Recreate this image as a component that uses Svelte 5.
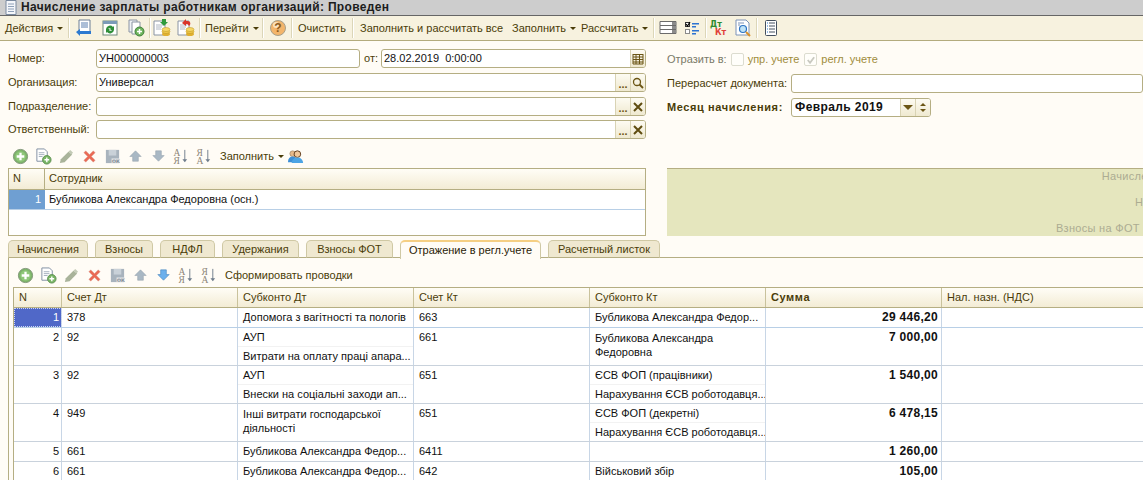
<script>
  const topBar = [
    { text: 'Действия', arrow: true, w: 64, pad: 1 }, { sep: 1 },
    { icon: 'back', w: 28 }, { icon: 'refresh', w: 24 }, { icon: 'copy', w: 27 }, { sep: 1 },
    { icon: 'coinsIn', w: 22 }, { icon: 'coinsOut', w: 26 }, { sep: 1 },
    { text: 'Перейти', arrow: true, w: 61, pad: 4 }, { sep: 1 },
    { icon: 'help', w: 27 }, { sep: 1 },
    { text: 'Очистить', w: 59, pad: 5 }, { sep: 1 },
    { text: 'Заполнить и рассчитать все', w: 158, pad: 6 },
    { text: 'Заполнить', arrow: true, w: 69, pad: 0 },
    { text: 'Рассчитать', arrow: true, w: 72, pad: 0 }, { sep: 1 },
    { icon: 'rows', w: 26 }, { icon: 'checks', w: 24 }, { sep: 1 },
    { icon: 'dtkt', w: 22 }, { icon: 'preview', w: 27 }, { sep: 1 },
    { icon: 'list', w: 26 }
  ];

  const listTools = ['add', 'addDoc', 'edit', 'del', 'save', 'up', 'down', 'sortAz', 'sortZa'];

  const tabs = [
    { name: 'Начисления', w: 80 },
    { name: 'Взносы', w: 58 },
    { name: 'НДФЛ', w: 55 },
    { name: 'Удержания', w: 77 },
    { name: 'Взносы ФОТ', w: 87 },
    { name: 'Отражение в регл.учете', w: 141, active: true },
    { name: 'Расчетный листок', w: 112 }
  ];

  const columns = ['N', 'Счет Дт', 'Субконто Дт', 'Счет Кт', 'Субконто Кт', 'Сумма', 'Нал. назн. (НДС)'];

  const entries = [
    { n: 1, dt: '378', subDt: ['Допомога з вагітності та пологів'], kt: '663', subKt: ['Бубликова Александра Федор...'], sum: '29 446,20' },
    { n: 2, dt: '92', subDt: ['АУП', 'Витрати на оплату праці апара...'], kt: '661', subKt: ['Бубликова Александра Федоровна'], wrapKt: true, sum: '7 000,00' },
    { n: 3, dt: '92', subDt: ['АУП', 'Внески на соціальні заходи ап...'], kt: '651', subKt: ['ЄСВ ФОП (працівники)', 'Нарахування ЄСВ роботодавця...'], sum: '1 540,00' },
    { n: 4, dt: '949', subDt: ['Інші витрати господарської діяльності'], wrapDt: true, kt: '651', subKt: ['ЄСВ ФОП (декретні)', 'Нарахування ЄСВ роботодавця...'], sum: '6 478,15' },
    { n: 5, dt: '661', subDt: ['Бубликова Александра Федор...'], kt: '6411', subKt: [''], sum: '1 260,00' },
    { n: 6, dt: '661', subDt: ['Бубликова Александра Федор...'], kt: '642', subKt: ['Військовий збір'], sum: '105,00' }
  ];
</script>

{#snippet icon(name)}
  <svg class="ico" viewBox="0 0 18 18" width="18" height="18">
    {#if name === 'back'}
      <path d="M4 1h11v13H4z" fill="#fff" stroke="#6d7f95" />
      <path d="M6 4h7M6 6h7M6 8h7" stroke="#5a7fb0" />
      <path d="M1 13l4-3v2h11v3H5v2z" fill="#2b79d0" />
    {:else if name === 'refresh'}
      <rect x="2" y="2" width="14" height="14" fill="#fff" stroke="#6f8a7c" />
      <rect x="2" y="2" width="14" height="3" fill="#7b9bb8" />
      <path d="M5 10a4 4 0 0 1 7-2l1-1v4H9l1-1a2 2 0 0 0-3 0zM13 11a4 4 0 0 1-7 2l-1 1v-4h4l-1 1a2 2 0 0 0 3 0z" fill="#2f8f3a" />
    {:else if name === 'copy'}
      <path d="M2 1h8v12H2z" fill="#eef1f5" stroke="#8a94a3" />
      <path d="M5 3h8v12H5z" fill="#fff" stroke="#8a94a3" />
      <circle cx="12.5" cy="12.5" r="4.5" fill="#6cb35c" stroke="#3f7f3a" />
      <path d="M12.5 10v5M10 12.5h5" stroke="#fff" stroke-width="1.5" />
    {:else if name === 'coinsIn' || name === 'coinsOut'}
      <path d="M1 2h11v14H1z" fill="#fff" stroke="#8a94a3" />
      <path d="M3 6h7M3 8h6M3 10h5" stroke="#b0b8c4" />
      <ellipse cx="13" cy="15" rx="4" ry="2" fill="#e0b030" />
      <ellipse cx="13" cy="12.5" rx="4" ry="2" fill="#f0c848" stroke="#b8901e" stroke-width=".5" />
      <ellipse cx="13" cy="10.5" rx="4" ry="2" fill="#f6d765" stroke="#b8901e" stroke-width=".5" />
      {#if name === 'coinsIn'}
        <path d="M9 0h4v3h2l-4 4-4-4h2z" fill="#2e9a3c" />
      {:else}
        <path d="M5 4l4-4v2h2a3 3 0 0 1 2 4l-1 1a3 3 0 0 0-3-2v2z" fill="#d9352a" />
      {/if}
    {:else if name === 'help'}
      <circle cx="9" cy="9" r="7.5" fill="#f3b56b" stroke="#a8a08a" />
      <circle cx="7" cy="6" r="3" fill="#fbe3bf" />
      <text x="9" y="13" class="ico-q">?</text>
    {:else if name === 'rows'}
      <g fill="#fff" stroke="#6b6b6b">
        <path d="M1 2.500h16v4H1zM1 6.500h16v4H1zM1 10.500h16v4H1z" />
      </g>
      <path d="M13 3h4v3h-4zM13 7h4v3h-4zM13 11h4v3h-4z" fill="#8b8b8b" />
    {:else if name === 'checks'}
      <rect x="1.500" y="3.500" width="4" height="4" fill="#fff" stroke="#333" />
      <path d="M2 5l1.500 2L6 3" stroke="#000" fill="none" stroke-width="1.200" />
      <rect x="1.500" y="10.500" width="4" height="4" fill="#fff" stroke="#8a8a8a" />
      <path d="M8 4h7v1.500H8zM8 7h4v1.500H8zM8 11h7v1.500H8zM8 14h4v1.500H8z" fill="#2c73d2" />
    {:else if name === 'dtkt'}
      <text x="1" y="8" class="ico-dt">Дт</text>
      <text x="6" y="16" class="ico-kt">Кт</text>
    {:else if name === 'preview'}
      <path d="M2 1h10l3 3v12H2z" fill="#fff" stroke="#7c93b8" />
      <path d="M4 4h6M4 6h2" stroke="#7c93b8" />
      <circle cx="9" cy="10" r="3.500" fill="#bfe3f7" stroke="#2d74c4" stroke-width="1.200" />
      <path d="M12 13l4 4" stroke="#d8902a" stroke-width="2" />
    {:else if name === 'list'}
      <rect x="3.500" y="1.500" width="11" height="15" rx="1" fill="#fff" stroke="#44505f" />
      <path d="M5 4h1M5 7h1M5 10h1M5 13h1" stroke="#2a7ad0" />
      <path d="M7 4h6M7 7h6M7 10h6M7 13h6" stroke="#44505f" />
    {:else if name === 'add'}
      <circle cx="9" cy="9" r="7.500" fill="#7db56a" stroke="#7f9477" />
      <circle cx="9" cy="9" r="5.500" fill="#8fc77a" />
      <path d="M9 5v8M5 9h8" stroke="#fff" stroke-width="2.400" />
    {:else if name === 'addDoc'}
      <path d="M2 1h8l3 3v10H2z" fill="#fff" stroke="#7e8ca0" />
      <path d="M4 5h6M4 7h6M4 9h4" stroke="#a3aebd" />
      <circle cx="12.500" cy="12.500" r="4.500" fill="#78b565" stroke="#5c8f50" />
      <path d="M12.500 10v5M10 12.500h5" stroke="#fff" stroke-width="1.500" />
    {:else if name === 'edit'}
      <path d="M3 12l8-8 4 3-8 8-5 1z" fill="#a9b39a" />
      <path d="M11 4l2-2 3 3-2 2z" fill="#c3cab6" />
    {:else if name === 'del'}
      <path d="M3 5l2-2 4 4 4-4 2 2-4 4 4 4-2 2-4-4-4 4-2-2 4-4z" fill="#ea6a55" stroke="#d9a79c" stroke-width=".5" />
    {:else if name === 'save'}
      <rect x="2" y="2" width="14" height="14" fill="#a8b3bd" />
      <rect x="5" y="2" width="8" height="6" fill="#c9d1d8" />
      <rect x="8" y="11" width="8" height="5" fill="#dfe3e6" />
      <text x="8.500" y="15.500" class="ico-ok">ОК</text>
    {:else if name === 'up' || name === 'down'}
      <path d={name === 'up' ? 'M9 3l6 6h-3v5H6V9H3z' : 'M6 3h6v5h3l-6 6-6-6h3z'} fill="var(--arrow)" stroke="var(--arrow-line)" stroke-width=".6" />
    {:else if name === 'sortAz' || name === 'sortZa'}
      <text x="0.500" y="8" class="ico-sort">{name === 'sortAz' ? 'А' : 'Я'}</text>
      <text x="0.500" y="17" class="ico-sort">{name === 'sortAz' ? 'Я' : 'А'}</text>
      <path d="M12.500 2v12" stroke="#6f7d8c" />
      <path d="M10 12h5l-2.500 3z" fill="#6f7d8c" />
    {/if}
  </svg>
{/snippet}

{#snippet searchIcon()}
  <svg viewBox="0 0 12 12" width="12" height="12"><circle cx="5" cy="5" r="3.500" fill="none" stroke="#6b5514" stroke-width="1.300" /><path d="M7.500 7.500l3.500 3.500" stroke="#6b5514" stroke-width="1.800" /></svg>
{/snippet}

{#snippet clearField()}
  <div class="input">
    <span class="input-value"></span>
    <span class="input-btn dots">...</span>
    <span class="input-btn">
      <svg viewBox="0 0 12 12" width="12" height="12"><path d="M2 2l8 8M10 2l-8 8" stroke="#5f4c10" stroke-width="2" /></svg>
    </span>
  </div>
{/snippet}

{#snippet lines(items, wrap)}
  {#if wrap}
    <div class="line wrap">{items[0]}</div>
  {:else}
    {#each items as item, i}
      <div class="line" class:split={i > 0}>{item}</div>
    {/each}
  {/if}
{/snippet}

<div class="window">
  <div class="titlebar">
    <svg class="title-ico" viewBox="0 0 14 15" width="14" height="15">
      <path d="M2 .5h10v14H2z" fill="#f4f6fa" stroke="#7a8aa0" />
      <path d="M4 4h6M4 6.500h6M4 9h6M4 11.500h6" stroke="#8ea0b8" />
    </svg>
    <span class="title">Начисление зарплаты работникам организаций: Проведен</span>
  </div>

  <div class="toolbar">
    {#each topBar as item}
      {#if item.sep}
        <span class="sep"></span>
      {:else if item.icon}
        <span class="tool" style="width:{item.w}px">{@render icon(item.icon)}</span>
      {:else}
        <span class="tool text" style="width:{item.w}px;padding-left:{item.pad}px">
          {item.text}
          {#if item.arrow}<i class="caret"></i>{/if}
        </span>
      {/if}
    {/each}
  </div>

  <div class="form">
    <div class="form-left">
      <div class="row">
        <span class="label">Номер:</span>
        <div class="input number"><span class="input-value">УН000000003</span></div>
        <span class="from">от:</span>
        <div class="input date">
          <span class="input-value">28.02.2019  0:00:00</span>
          <span class="input-btn">
            <svg viewBox="0 0 12 12" width="12" height="12"><path d="M1 1.500h10M1 4h10M1 6.500h10M1 9h10M1 11h10M1 1v10M4 1v10M7.500 1v10M11 1v10" stroke="#6b5514" fill="none" /></svg>
          </span>
        </div>
      </div>
      <div class="row">
        <span class="label">Организация:</span>
        <div class="input grow">
          <span class="input-value">Универсал</span>
          <span class="input-btn dots">...</span>
          <span class="input-btn">{@render searchIcon()}</span>
        </div>
      </div>
      <div class="row">
        <span class="label">Подразделение:</span>
        <div class="grow">{@render clearField()}</div>
      </div>
      <div class="row tight">
        <span class="label">Ответственный:</span>
        <div class="grow">{@render clearField()}</div>
      </div>
    </div>

    <div class="form-right">
      <div class="reflect">
        <span class="muted">Отразить в:</span>
        <span class="check"></span>
        <span class="ochre">упр. учете</span>
        <span class="check checked">
          <svg viewBox="0 0 12 12" width="12" height="12"><path d="M3 6l2.500 3L10 3" fill="none" stroke="#c9c9c0" stroke-width="2" /></svg>
        </span>
        <span class="ochre">регл. учете</span>
      </div>
      <div class="row right">
        <span class="rlabel">Перерасчет документа:</span>
        <div class="input grow"><span class="input-value"></span></div>
      </div>
      <div class="row right">
        <span class="rlabel strong">Месяц начисления:</span>
        <div class="input month">
          <span class="input-value month-value">Февраль 2019</span>
          <span class="input-btn"><i class="caret big"></i></span>
          <span class="input-btn spin"><i class="mini up"></i><i class="mini"></i></span>
        </div>
      </div>
    </div>
  </div>

  <div class="staff">
    <div class="staff-left">
      <div class="list-tools staff-tools">
        {#each listTools as name}
          <span class="tool small">{@render icon(name)}</span>
        {/each}
        <span class="tool text fill">Заполнить <i class="caret"></i></span>
        <span class="tool small people">
          <svg viewBox="0 0 18 18" width="18" height="18">
            <circle cx="6" cy="6" r="3" fill="#e6b98a" stroke="#7d6a50" stroke-width=".5" />
            <path d="M1 15c0-4 2-6 5-6s5 2 5 6z" fill="#3d8fd6" />
            <circle cx="11" cy="6.500" r="3.500" fill="#f0c79a" stroke="#5f3a1c" />
            <path d="M5 16c0-4 3-6 6-6s6 2 6 6z" fill="#4da4e4" />
          </svg>
        </span>
      </div>
      <div class="staff-table">
        <div class="staff-head">
          <span class="staff-n">N</span>
          <span class="staff-name">Сотрудник</span>
        </div>
        <div class="staff-row">
          <span class="staff-n selected">1</span>
          <span class="staff-name">Бубликова Александра Федоровна (осн.)</span>
        </div>
      </div>
    </div>
    <div class="totals">
      <div>Начисления:</div>
      <div>НДФЛ:</div>
      <div>Взносы на ФОТ ЕСВ:</div>
    </div>
  </div>

  <div class="tabs">
    {#each tabs as tab}
      <span class="tab" class:active={tab.active} style="width:{tab.w}px">{tab.name}</span>
    {/each}
  </div>

  <div class="page">
    <div class="list-tools page-tools">
      {#each listTools as name}
        <span class="tool small" class:live={name === 'down'}>{@render icon(name)}</span>
      {/each}
      <span class="tool text fill">Сформировать проводки</span>
    </div>

    <div class="grid">
      <div class="grid-row head">
        {#each columns as col}
          <div class="hcell" class:bold={col === 'Сумма'}>{col}</div>
        {/each}
      </div>
      {#each entries as e, i}
        <div class="grid-row body" class:first={i === 0}>
          <div class="cell num" class:focus={i === 0}>{e.n}</div>
          <div class="cell"><div class="line">{e.dt}</div></div>
          <div class="cell">{@render lines(e.subDt, e.wrapDt)}</div>
          <div class="cell"><div class="line">{e.kt}</div></div>
          <div class="cell">{@render lines(e.subKt, e.wrapKt)}</div>
          <div class="cell sum"><div class="line">{e.sum}</div></div>
          <div class="cell"></div>
        </div>
      {/each}
    </div>
  </div>
</div>

<style>
  :global(body) {
    margin: 0;
    overflow: hidden;
  }

  .window {
    width: 1143px;
    height: 480px;
    overflow: hidden;
    background: #fffcf6;
    color: #4a3c08;
    font: 11px/15px "Liberation Sans", Arial, sans-serif;
  }

  .titlebar {
    height: 15px;
    background: #cdcdcd;
    border-bottom: 1px solid #666;
    display: flex;
    align-items: center;
    padding-left: 4px;
    gap: 3px;
    overflow: hidden;
  }

  .title {
    font-weight: bold;
    font-size: 12px;
    letter-spacing: 0.33px;
    color: #1d1d1d;
  }

  .toolbar {
    height: 24px;
    background: #f7f2df;
    border-bottom: 1px solid #b3ab7d;
    display: flex;
    align-items: center;
    padding-left: 4px;
  }

  .sep {
    width: 1px;
    height: 20px;
    background: #dcd6b8;
    border-right: 1px solid #fff;
    flex: none;
  }

  .tool {
    display: flex;
    align-items: center;
    justify-content: center;
    flex: none;
    white-space: nowrap;
  }

  .tool.text {
    justify-content: flex-start;
    gap: 4px;
    box-sizing: border-box;
  }

  .ico {
    display: block;
  }

  .ico-q {
    font: bold 12px "Liberation Sans", sans-serif;
    fill: #8a5a1e;
    text-anchor: middle;
  }

  .ico-dt {
    font: bold 8px "DejaVu Sans", sans-serif;
    fill: #2e8b2e;
  }

  .ico-kt {
    font: bold 8px "DejaVu Sans", sans-serif;
    fill: #e0403a;
  }

  .ico-ok {
    font: bold 5px "DejaVu Sans", sans-serif;
    fill: #7f8a94;
  }

  .ico-sort {
    font: 10px "Liberation Serif", serif;
    fill: #8c8578;
  }

  .caret {
    display: inline-block;
    width: 0;
    height: 0;
    border: 3px solid transparent;
    border-top: 3px solid #4a3c08;
    border-bottom: 0;
  }

  .caret.big {
    border-width: 5px 5px 0;
    border-top-color: #6b5514;
    border-left-color: transparent;
    border-right-color: transparent;
  }

  .form {
    display: flex;
    padding: 8px 0 0 8px;
    gap: 21px;
    height: 106px;
    box-sizing: border-box;
  }

  .form-left {
    width: 638px;
    flex: none;
    display: flex;
    flex-direction: column;
    gap: 5px;
  }

  .form-right {
    flex: 1;
    display: flex;
    flex-direction: column;
    gap: 5px;
    min-width: 0;
  }

  .row {
    display: flex;
    align-items: center;
    height: 19px;
  }

  .row.tight {
    margin-top: -1px;
  }

  .label {
    width: 88px;
    flex: none;
    white-space: nowrap;
  }

  .rlabel {
    width: 124px;
    flex: none;
    white-space: nowrap;
  }

  .strong {
    font-weight: bold;
    letter-spacing: 0.6px;
  }

  .input {
    height: 19px;
    box-sizing: border-box;
    border: 1px solid #b5ae83;
    border-radius: 3px;
    background: #fff;
    display: flex;
    overflow: hidden;
    color: #111;
  }

  .input-value {
    flex: 1;
    padding-left: 2px;
    line-height: 17px;
    white-space: pre;
    min-width: 0;
  }

  .input-btn {
    width: 14px;
    flex: none;
    background: linear-gradient(#fdfbf2, #efe9d0);
    border-left: 1px solid #d9d3b4;
    display: flex;
    align-items: center;
    justify-content: center;
  }

  .dots {
    font-weight: bold;
    color: #6b5514;
    line-height: 13px;
    align-items: flex-end;
  }

  .number {
    width: 264px;
    flex: none;
  }

  .from {
    margin: 0 3px 0 4px;
  }

  .date {
    flex: 1;
  }

  .grow {
    flex: 1;
    min-width: 0;
  }

  .reflect {
    display: flex;
    align-items: center;
    height: 19px;
    margin-top: 1px;
    gap: 4px;
  }

  .muted {
    color: #7a7a68;
  }

  .ochre {
    color: #a08c3c;
  }

  .check {
    width: 11px;
    height: 11px;
    border: 1px solid #dcdccf;
    border-radius: 2px;
    background: #fffefa;
    display: flex;
  }

  .checked {
    margin-left: 1px;
  }

  .row.right + .row.right {
    margin-top: 0;
  }

  .month {
    width: 140px;
    flex: none;
  }

  .month-value {
    font-weight: bold;
    font-size: 12px;
    letter-spacing: 0.4px;
    padding-left: 3px;
  }

  .spin {
    flex-direction: column;
    gap: 3px;
  }

  .mini {
    display: block;
    border: 3px solid transparent;
    border-top: 3px solid #6b5514;
    border-bottom: 0;
  }

  .mini.up {
    border-top: 0;
    border-bottom: 3px solid #6b5514;
  }

  .staff {
    display: flex;
    padding-left: 8px;
    gap: 21px;
    height: 92px;
  }

  .staff-left {
    width: 638px;
    flex: none;
  }

  .list-tools {
    height: 21px;
    display: flex;
    align-items: center;
    padding-left: 1px;
    box-sizing: border-box;
    --arrow: #a9b8c4;
    --arrow-line: #98a5b0;
  }

  .staff-tools {
    padding-bottom: 2px;
  }

  .tool.small {
    width: 23px;
  }

  .tool.small svg {
    width: 17px;
    height: 17px;
  }

  .tool.small.live {
    --arrow: #6cb0ec;
    --arrow-line: #3f7fb8;
  }

  .tool.text.fill {
    margin-left: 4px;
  }

  .staff-table {
    height: 68px;
    box-sizing: border-box;
    border: 1px solid #b5ae83;
    background: #fff;
  }

  .staff-head {
    height: 21px;
    box-sizing: border-box;
    display: flex;
    background: linear-gradient(#fffdf6, #f3ecd5);
    border-bottom: 1px solid #b5ae83;
    line-height: 19px;
  }

  .staff-row {
    height: 19px;
    display: flex;
    border-bottom: 1px solid #b8cfe6;
    color: #111;
    line-height: 19px;
  }

  .staff-n {
    width: 36px;
    flex: none;
    box-sizing: border-box;
    padding: 0 4px;
    border-right: 1px solid #b5ae83;
  }

  .staff-name {
    padding-left: 4px;
  }

  .staff-n.selected {
    background: #6f9fd2;
    color: #fff;
    text-align: right;
    border-right: 0;
  }

  .totals {
    flex: 1;
    margin-top: 21px;
    height: 68px;
    background: #e5e6be;
    border-top: 1px solid #b5ae83;
    box-sizing: border-box;
    overflow: hidden;
    color: #acac92;
    letter-spacing: 0.3px;
    display: flex;
    flex-direction: column;
    gap: 11px;
    text-align: right;
  }

  .totals div {
    width: 503px;
    height: 15px;
    white-space: nowrap;
    flex: none;
  }

  .tabs {
    display: flex;
    gap: 7px;
    padding: 1px 0 0 8px;
    height: 18px;
    position: relative;
    z-index: 1;
    margin-bottom: -1px;
  }

  .tab {
    box-sizing: border-box;
    height: 18px;
    border: 1px solid #cfc8a4;
    border-bottom: 1px solid #b5ae83;
    border-radius: 5px 5px 0 0;
    background: #efe8d0;
    text-align: center;
    line-height: 17px;
  }

  .tab.active {
    background: #fffcf6;
    height: 19px;
    color: #2a2206;
    border-top: 2px solid #f5cf84;
    border-bottom: 0;
  }

  .page {
    margin-left: 8px;
    border-top: 1px solid #b5ae83;
    border-left: 1px solid #b5ae83;
    padding: 7px 0 0 4px;
  }

  .page-tools {
    height: 20px;
    margin-bottom: 2px;
  }

  .grid {
    border-left: 1px solid #b5ae83;
    border-top: 1px solid #b5ae83;
    background: #fff;
  }

  .grid-row {
    display: grid;
    grid-template-columns: 48px 176px 176px 176px 176px 176px 1fr;
  }

  .head {
    height: 20px;
    background: linear-gradient(#fffdf6, #f3ecd5);
    border-bottom: 1px solid #b5ae83;
    box-sizing: border-box;
  }

  .hcell {
    padding-left: 5px;
    border-right: 1px solid #c9c29c;
    line-height: 19px;
    white-space: nowrap;
  }

  .hcell:last-child {
    border-right: 0;
  }

  .bold {
    font-weight: bold;
    letter-spacing: 0.6px;
  }

  .body {
    border-bottom: 1px solid #c9d2dc;
    color: #111;
  }

  .body.first {
    border-bottom-color: #b8cfe6;
  }

  .cell {
    border-right: 1px solid #c8d6e6;
    min-width: 0;
  }

  .cell:last-child {
    border-right: 0;
  }

  .line {
    height: 18px;
    padding: 0 3px 0 5px;
    line-height: 19px;
    white-space: nowrap;
    overflow: hidden;
  }

  .line.wrap {
    height: auto;
    white-space: normal;
    line-height: 14px;
    padding-top: 3px;
  }

  .line.split {
    border-top: 1px solid #f2f2f2;
  }

  .num {
    text-align: right;
    padding: 0 2px;
    line-height: 19px;
  }

  .focus {
    background: #5068c8;
    color: #fff;
    outline: 1px dotted #cfd6f0;
    outline-offset: -1px;
  }

  .sum {
    text-align: right;
    font-weight: bold;
    font-size: 12px;
    letter-spacing: 0.3px;
  }
</style>
